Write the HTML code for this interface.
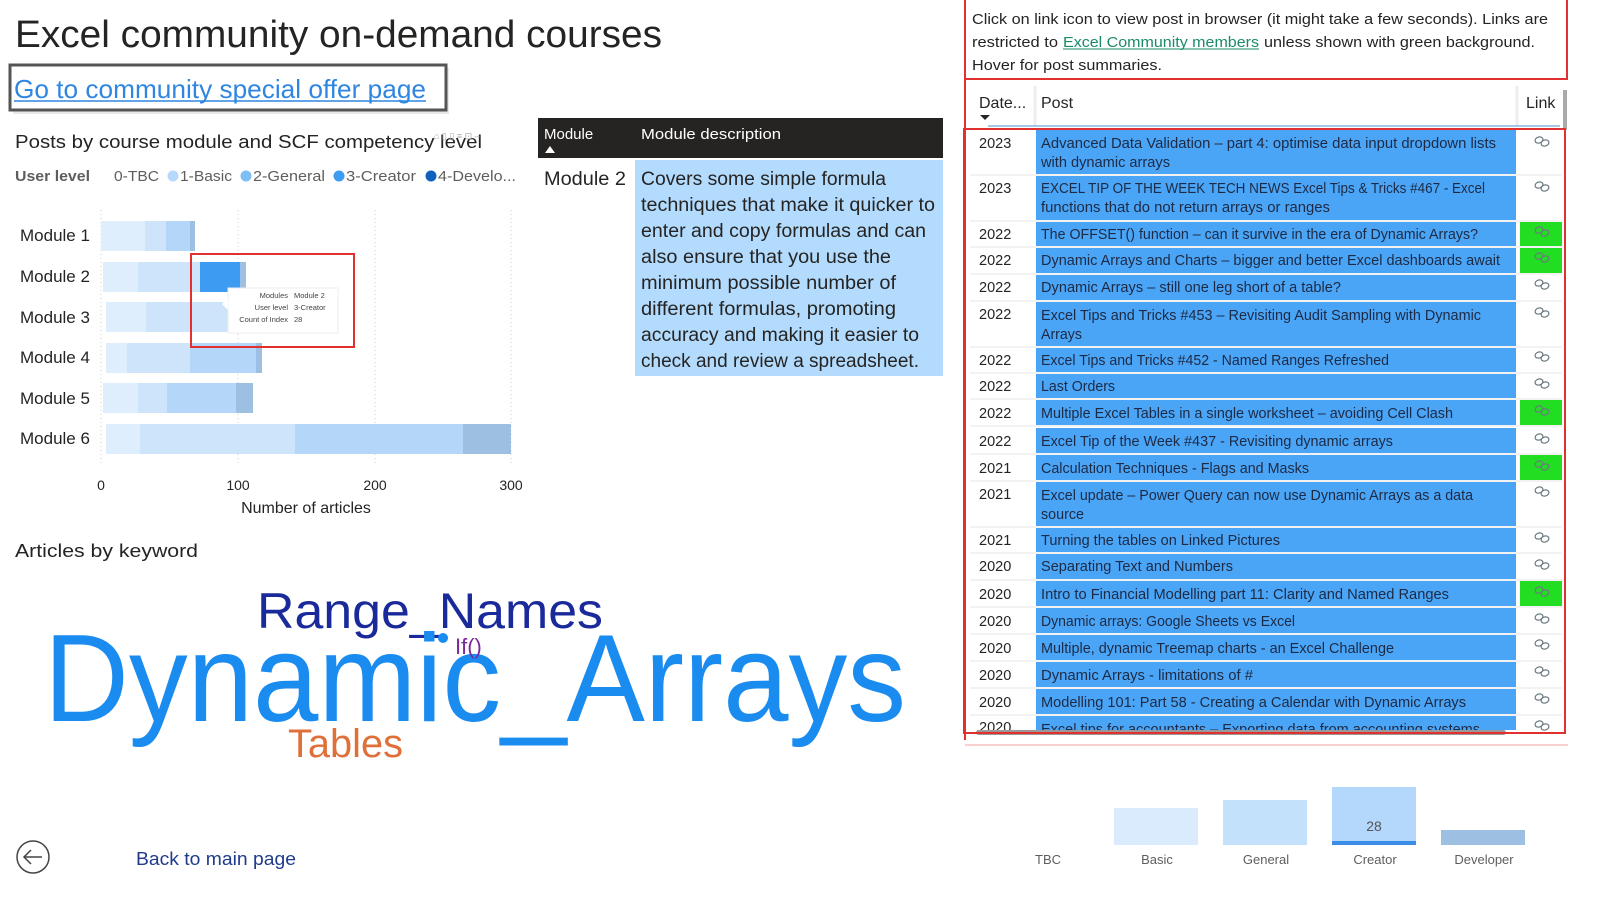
<!DOCTYPE html>
<html><head><meta charset="utf-8"><style>
html,body{margin:0;padding:0;background:#fff;width:1600px;height:897px;overflow:hidden;}
svg{display:block;font-family:"Liberation Sans",sans-serif;}
</style></head><body>
<svg width="1600" height="897" viewBox="0 0 1600 897" xmlns="http://www.w3.org/2000/svg" overflow="hidden">
<rect width="1600" height="897" fill="#fff"/>
<text x="15" y="47" font-size="38" fill="#252423" textLength="647" lengthAdjust="spacingAndGlyphs">Excel community on-demand courses</text>
<rect x="13" y="68" width="436" height="46" fill="#d8d8d8" opacity="0.6"/>
<rect x="10" y="65" width="436" height="45" fill="#fff" stroke="#555" stroke-width="3"/>
<text x="14" y="98" font-size="26" fill="#2f86e0" textLength="412" lengthAdjust="spacingAndGlyphs">Go to community special offer page</text>
<line x1="14" y1="101" x2="426" y2="101" stroke="#2f86e0" stroke-width="1.5"/>
<text x="15" y="148" font-size="18" fill="#252423" textLength="467" lengthAdjust="spacingAndGlyphs">Posts by course module and SCF competency level</text>
<text x="434" y="139" font-size="9" fill="#aaa">⌂ ▯ ▯ ≡ ⊡ –</text>
<text x="15" y="181" font-size="15" font-weight="bold" fill="#605e5c" textLength="75" lengthAdjust="spacingAndGlyphs">User level</text>
<text x="114" y="181" font-size="15" fill="#605e5c" textLength="45" lengthAdjust="spacingAndGlyphs">0-TBC</text>
<circle cx="173" cy="176" r="5.5" fill="#b6d8fa"/>
<text x="180" y="181" font-size="15" fill="#605e5c" textLength="52" lengthAdjust="spacingAndGlyphs">1-Basic</text>
<circle cx="246" cy="176" r="5.5" fill="#7fbdf7"/>
<text x="253" y="181" font-size="15" fill="#605e5c" textLength="72" lengthAdjust="spacingAndGlyphs">2-General</text>
<circle cx="339" cy="176" r="5.5" fill="#3d9bf2"/>
<text x="346" y="181" font-size="15" fill="#605e5c" textLength="70" lengthAdjust="spacingAndGlyphs">3-Creator</text>
<circle cx="431" cy="176" r="5.5" fill="#1060c0"/>
<text x="438" y="181" font-size="15" fill="#605e5c" textLength="78" lengthAdjust="spacingAndGlyphs">4-Develo...</text>
<g stroke="#ccc" stroke-dasharray="1,3">
<line x1="101" y1="210" x2="101" y2="465"/><line x1="238" y1="210" x2="238" y2="465"/>
<line x1="375" y1="210" x2="375" y2="465"/><line x1="511" y1="210" x2="511" y2="465"/>
</g>
<g font-size="17" fill="#252423">
<text x="20" y="241">Module 1</text><text x="20" y="282">Module 2</text><text x="20" y="323">Module 3</text>
<text x="20" y="363">Module 4</text><text x="20" y="404">Module 5</text><text x="20" y="444">Module 6</text>
</g>
<rect x="101" y="221" width="44" height="30" fill="#dfeefd"/><rect x="145" y="221" width="21" height="30" fill="#cde4fb"/><rect x="166" y="221" width="24" height="30" fill="#b4d7f9"/><rect x="190" y="221" width="5" height="30" fill="#9dbfe2"/>
<rect x="103" y="262" width="35" height="30" fill="#dfeefd"/><rect x="138" y="262" width="62" height="30" fill="#cde4fb"/><rect x="200" y="262" width="40" height="30" fill="#3d9bf2"/><rect x="240" y="262" width="6" height="30" fill="#9dbfe2"/>
<rect x="106" y="302" width="40" height="30" fill="#dfeefd"/><rect x="146" y="302" width="84" height="30" fill="#cde4fb"/>
<rect x="106" y="343" width="21" height="30" fill="#dfeefd"/><rect x="127" y="343" width="63" height="30" fill="#cde4fb"/><rect x="190" y="343" width="66" height="30" fill="#b4d7f9"/><rect x="256" y="343" width="6" height="30" fill="#9dbfe2"/>
<rect x="103" y="383" width="35" height="30" fill="#dfeefd"/><rect x="138" y="383" width="29" height="30" fill="#cde4fb"/><rect x="167" y="383" width="69" height="30" fill="#b4d7f9"/><rect x="236" y="383" width="17" height="30" fill="#9dbfe2"/>
<rect x="106" y="424" width="34" height="30" fill="#dfeefd"/><rect x="140" y="424" width="155" height="30" fill="#cde4fb"/><rect x="295" y="424" width="168" height="30" fill="#b4d7f9"/><rect x="463" y="424" width="48" height="30" fill="#9dbfe2"/>
<rect x="228" y="288" width="110" height="45" fill="#fff" stroke="#eee"/>
<polygon points="228,298 222,304 228,310" fill="#fff"/>
<g font-size="7.5" fill="#444">
<text x="288" y="298" text-anchor="end">Modules</text><text x="294" y="298">Module 2</text>
<text x="288" y="310" text-anchor="end">User level</text><text x="294" y="310">3-Creator</text>
<text x="288" y="322" text-anchor="end">Count of Index</text><text x="294" y="322">28</text>
</g>
<rect x="191" y="254" width="163" height="93" fill="none" stroke="#e03030" stroke-width="2"/>
<g font-size="14" fill="#252423" text-anchor="middle">
<text x="101" y="490">0</text><text x="238" y="490">100</text><text x="375" y="490">200</text><text x="511" y="490">300</text>
</g>
<text x="306" y="513" font-size="16" fill="#252423" text-anchor="middle">Number of articles</text>
<rect x="538" y="118" width="405" height="40" fill="#252423"/>
<text x="544" y="139" font-size="15" fill="#fff">Module</text>
<polygon points="545,153 550,146 555,153" fill="#fff"/>
<text x="641" y="139" font-size="15" fill="#fff" textLength="140" lengthAdjust="spacingAndGlyphs">Module description</text>
<rect x="635" y="160" width="308" height="216" fill="#b3dbfd"/>
<text x="544" y="185" font-size="19" fill="#252423" textLength="82" lengthAdjust="spacingAndGlyphs">Module 2</text>
<g font-size="19" fill="#252423">
<text x="641" y="185" textLength="245" lengthAdjust="spacingAndGlyphs">Covers some simple formula</text>
<text x="641" y="211" textLength="294" lengthAdjust="spacingAndGlyphs">techniques that make it quicker to</text>
<text x="641" y="237" textLength="285" lengthAdjust="spacingAndGlyphs">enter and copy formulas and can</text>
<text x="641" y="263" textLength="250" lengthAdjust="spacingAndGlyphs">also ensure that you use the</text>
<text x="641" y="289" textLength="255" lengthAdjust="spacingAndGlyphs">minimum possible number of</text>
<text x="641" y="315" textLength="255" lengthAdjust="spacingAndGlyphs">different formulas, promoting</text>
<text x="641" y="341" textLength="278" lengthAdjust="spacingAndGlyphs">accuracy and making it easier to</text>
<text x="641" y="367" textLength="278" lengthAdjust="spacingAndGlyphs">check and review a spreadsheet.</text>
</g>
<text x="15" y="557" font-size="18" fill="#252423" textLength="183" lengthAdjust="spacingAndGlyphs">Articles by keyword</text>
<text x="257" y="628" font-size="50" fill="#1a2a9a" textLength="346" lengthAdjust="spacingAndGlyphs">Range_Names</text>
<text x="44" y="721" font-size="124" fill="#1a8cf0" textLength="862" lengthAdjust="spacingAndGlyphs">Dynamic_Arrays</text>
<circle cx="443" cy="638" r="5" fill="#1a8cf0"/>
<text x="455" y="654" font-size="22" fill="#7a2a9a">If()</text>
<text x="288" y="757" font-size="40" fill="#e0703a" textLength="115" lengthAdjust="spacingAndGlyphs">Tables</text>
<circle cx="33" cy="857" r="16" fill="none" stroke="#444" stroke-width="1.5"/>
<path d="M42 857 H24 M31 850 L24 857 L31 864" fill="none" stroke="#444" stroke-width="1.5"/>
<text x="136" y="865" font-size="18" fill="#1f3b8c" textLength="160" lengthAdjust="spacingAndGlyphs">Back to main page</text>
<line x1="965" y1="0" x2="965" y2="740" stroke="#e03030" stroke-width="2"/>
<line x1="965" y1="79" x2="1568" y2="79" stroke="#e03030" stroke-width="2"/>
<line x1="1567" y1="0" x2="1567" y2="79" stroke="#e03030" stroke-width="2"/>
<g font-size="15" fill="#252423">
<text x="972" y="24" textLength="576" lengthAdjust="spacingAndGlyphs">Click on link icon to view post in browser (it might take a few seconds). Links are</text>
<text x="972" y="47" textLength="86" lengthAdjust="spacingAndGlyphs">restricted to</text>
<text x="1063" y="47" fill="#1a8a6a" textLength="196" lengthAdjust="spacingAndGlyphs">Excel Community members</text>
<line x1="1063" y1="49" x2="1259" y2="49" stroke="#1a8a6a"/>
<text x="1264" y="47" textLength="271" lengthAdjust="spacingAndGlyphs">unless shown with green background.</text>
<text x="972" y="70" textLength="190" lengthAdjust="spacingAndGlyphs">Hover for post summaries.</text>
</g>
<line x1="1035" y1="86" x2="1035" y2="126" stroke="#eee" stroke-width="3"/>
<line x1="1517" y1="86" x2="1517" y2="126" stroke="#eee" stroke-width="3"/>
<text x="979" y="108" font-size="16" fill="#252423">Date...</text>
<polygon points="980,115 990,115 985,120" fill="#252423"/>
<text x="1041" y="108" font-size="16" fill="#252423">Post</text>
<text x="1526" y="108" font-size="16" fill="#252423">Link</text>
<rect x="1563" y="90" width="4" height="40" fill="#aaa"/>
<line x1="988" y1="126" x2="1560" y2="126" stroke="#4a90d0" stroke-width="1"/>
<g fill="#4aa5f7">
<rect x="1036" y="130" width="480" height="44"/><rect x="1036" y="176" width="480" height="44"/>
<rect x="1036" y="222" width="480" height="24"/><rect x="1036" y="248" width="480" height="25"/>
<rect x="1036" y="275" width="480" height="25"/><rect x="1036" y="302" width="480" height="44"/>
<rect x="1036" y="348" width="480" height="24"/><rect x="1036" y="374" width="480" height="24"/>
<rect x="1036" y="400" width="480" height="25"/><rect x="1036" y="428" width="480" height="25"/>
<rect x="1036" y="455" width="480" height="25"/><rect x="1036" y="482" width="480" height="44"/>
<rect x="1036" y="528" width="480" height="24"/><rect x="1036" y="554" width="480" height="25"/>
<rect x="1036" y="581" width="480" height="25"/><rect x="1036" y="608" width="480" height="25"/>
<rect x="1036" y="635" width="480" height="25"/><rect x="1036" y="662" width="480" height="25"/>
<rect x="1036" y="689" width="480" height="25"/><rect x="1036" y="716" width="480" height="14"/>
</g>
<g fill="#22dd22">
<rect x="1520" y="222" width="42" height="24"/><rect x="1520" y="248" width="42" height="25"/>
<rect x="1520" y="400" width="42" height="25"/><rect x="1520" y="455" width="42" height="25"/>
<rect x="1520" y="581" width="42" height="25"/>
</g>
<g stroke="#e4e4e4">
<line x1="970" y1="175" x2="1562" y2="175"/><line x1="970" y1="221" x2="1562" y2="221"/><line x1="970" y1="247" x2="1562" y2="247"/>
<line x1="970" y1="274" x2="1562" y2="274"/><line x1="970" y1="301" x2="1562" y2="301"/><line x1="970" y1="347" x2="1562" y2="347"/>
<line x1="970" y1="373" x2="1562" y2="373"/><line x1="970" y1="399" x2="1562" y2="399"/><line x1="970" y1="426" x2="1562" y2="426"/>
<line x1="970" y1="454" x2="1562" y2="454"/><line x1="970" y1="481" x2="1562" y2="481"/><line x1="970" y1="527" x2="1562" y2="527"/>
<line x1="970" y1="553" x2="1562" y2="553"/><line x1="970" y1="580" x2="1562" y2="580"/><line x1="970" y1="607" x2="1562" y2="607"/>
<line x1="970" y1="634" x2="1562" y2="634"/><line x1="970" y1="661" x2="1562" y2="661"/><line x1="970" y1="688" x2="1562" y2="688"/>
<line x1="970" y1="715" x2="1562" y2="715"/>
</g>
<g font-size="14.5" fill="#252423">
<text x="979" y="148">2023</text><text x="979" y="193">2023</text><text x="979" y="239">2022</text><text x="979" y="265">2022</text>
<text x="979" y="292">2022</text><text x="979" y="319">2022</text><text x="979" y="365">2022</text><text x="979" y="391">2022</text>
<text x="979" y="418">2022</text><text x="979" y="446">2022</text><text x="979" y="473">2021</text><text x="979" y="499">2021</text>
<text x="979" y="545">2021</text><text x="979" y="571">2020</text><text x="979" y="599">2020</text><text x="979" y="626">2020</text>
<text x="979" y="653">2020</text><text x="979" y="680">2020</text><text x="979" y="707">2020</text><text x="979" y="732">2020</text>
</g>
<g font-size="14.5" fill="#1e2a44">
<text x="1041" y="148" textLength="455" lengthAdjust="spacingAndGlyphs">Advanced Data Validation – part 4: optimise data input dropdown lists</text>
<text x="1041" y="167" textLength="129" lengthAdjust="spacingAndGlyphs">with dynamic arrays</text>
<text x="1041" y="193" textLength="444" lengthAdjust="spacingAndGlyphs">EXCEL TIP OF THE WEEK TECH NEWS Excel Tips &amp; Tricks #467 - Excel</text>
<text x="1041" y="212" textLength="289" lengthAdjust="spacingAndGlyphs">functions that do not return arrays or ranges</text>
<text x="1041" y="239" textLength="437" lengthAdjust="spacingAndGlyphs">The OFFSET() function – can it survive in the era of Dynamic Arrays?</text>
<text x="1041" y="265" textLength="459" lengthAdjust="spacingAndGlyphs">Dynamic Arrays and Charts – bigger and better Excel dashboards await</text>
<text x="1041" y="292" textLength="300" lengthAdjust="spacingAndGlyphs">Dynamic Arrays – still one leg short of a table?</text>
<text x="1041" y="320" textLength="440" lengthAdjust="spacingAndGlyphs">Excel Tips and Tricks #453 – Revisiting Audit Sampling with Dynamic</text>
<text x="1041" y="339" textLength="41" lengthAdjust="spacingAndGlyphs">Arrays</text>
<text x="1041" y="365" textLength="348" lengthAdjust="spacingAndGlyphs">Excel Tips and Tricks #452 - Named Ranges Refreshed</text>
<text x="1041" y="391" textLength="74" lengthAdjust="spacingAndGlyphs">Last Orders</text>
<text x="1041" y="418" textLength="412" lengthAdjust="spacingAndGlyphs">Multiple Excel Tables in a single worksheet – avoiding Cell Clash</text>
<text x="1041" y="446" textLength="352" lengthAdjust="spacingAndGlyphs">Excel Tip of the Week #437 - Revisiting dynamic arrays</text>
<text x="1041" y="473" textLength="268" lengthAdjust="spacingAndGlyphs">Calculation Techniques - Flags and Masks</text>
<text x="1041" y="500" textLength="432" lengthAdjust="spacingAndGlyphs">Excel update – Power Query can now use Dynamic Arrays as a data</text>
<text x="1041" y="519" textLength="43" lengthAdjust="spacingAndGlyphs">source</text>
<text x="1041" y="545" textLength="239" lengthAdjust="spacingAndGlyphs">Turning the tables on Linked Pictures</text>
<text x="1041" y="571" textLength="192" lengthAdjust="spacingAndGlyphs">Separating Text and Numbers</text>
<text x="1041" y="599" textLength="408" lengthAdjust="spacingAndGlyphs">Intro to Financial Modelling part 11: Clarity and Named Ranges</text>
<text x="1041" y="626" textLength="254" lengthAdjust="spacingAndGlyphs">Dynamic arrays: Google Sheets vs Excel</text>
<text x="1041" y="653" textLength="353" lengthAdjust="spacingAndGlyphs">Multiple, dynamic Treemap charts - an Excel Challenge</text>
<text x="1041" y="680" textLength="212" lengthAdjust="spacingAndGlyphs">Dynamic Arrays - limitations of #</text>
<text x="1041" y="707" textLength="425" lengthAdjust="spacingAndGlyphs">Modelling 101: Part 58 - Creating a Calendar with Dynamic Arrays</text>
<text x="1041" y="734" textLength="439" lengthAdjust="spacingAndGlyphs">Excel tips for accountants – Exporting data from accounting systems</text>
</g>
<rect x="966" y="730" width="600" height="10" fill="#fff"/>
<rect x="976" y="730" width="530" height="5" rx="2.5" fill="#999"/>
<g fill="none" stroke="#6a7a80" stroke-width="1.2">
<g id="lk"><ellipse cx="1539" cy="140" rx="4" ry="3" transform="rotate(-20 1539 140)"/><ellipse cx="1545" cy="143" rx="4" ry="3" transform="rotate(-20 1545 143)"/></g>
<use href="#lk" y="45"/><use href="#lk" y="90"/><use href="#lk" y="116"/><use href="#lk" y="143"/><use href="#lk" y="171"/>
<use href="#lk" y="215"/><use href="#lk" y="242"/><use href="#lk" y="269"/><use href="#lk" y="297"/><use href="#lk" y="324"/>
<use href="#lk" y="350"/><use href="#lk" y="396"/><use href="#lk" y="423"/><use href="#lk" y="450"/><use href="#lk" y="477"/>
<use href="#lk" y="503"/><use href="#lk" y="530"/><use href="#lk" y="557"/><use href="#lk" y="584"/>
</g>
<rect x="964" y="129" width="601" height="604" fill="none" stroke="#e03030" stroke-width="2"/>
<line x1="965" y1="745" x2="1568" y2="745" stroke="#f0a0a0" stroke-width="1"/>
<rect x="1114" y="808" width="84" height="37" fill="#d9ebfc"/>
<rect x="1223" y="800" width="84" height="45" fill="#c4e1fc"/>
<rect x="1332" y="787" width="84" height="58" fill="#b3d8fb"/>
<rect x="1332" y="841" width="84" height="4" fill="#3a8ee8"/>
<rect x="1441" y="830" width="84" height="15" fill="#9dbfe2"/>
<text x="1374" y="831" font-size="14" fill="#555" text-anchor="middle">28</text>
<g font-size="13" fill="#605e5c" text-anchor="middle">
<text x="1048" y="864">TBC</text><text x="1157" y="864">Basic</text><text x="1266" y="864">General</text>
<text x="1375" y="864">Creator</text><text x="1484" y="864">Developer</text>
</g>
</svg>
</body></html>
